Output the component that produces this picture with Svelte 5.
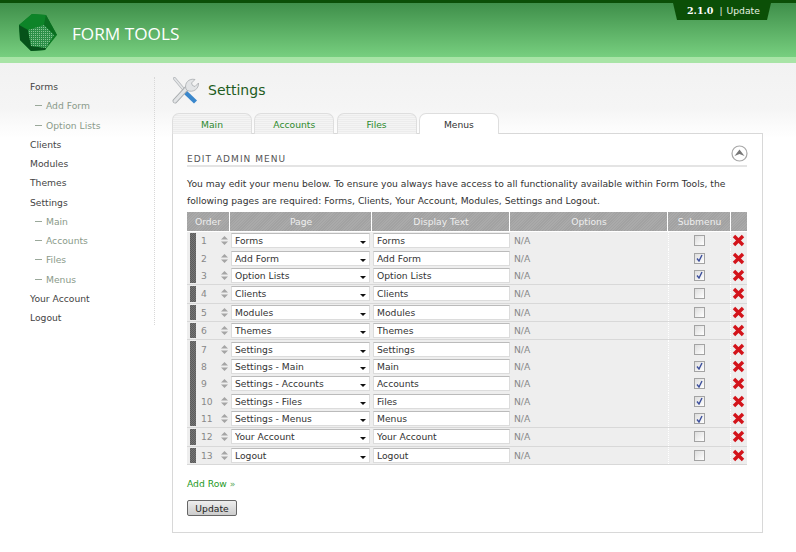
<script>
  const nav = [
    { label: "Forms" },
    { label: "Add Form", sub: true },
    { label: "Option Lists", sub: true },
    { label: "Clients" },
    { label: "Modules" },
    { label: "Themes" },
    { label: "Settings" },
    { label: "Main", sub: true },
    { label: "Accounts", sub: true },
    { label: "Files", sub: true },
    { label: "Menus", sub: true },
    { label: "Your Account" },
    { label: "Logout" }
  ];

  const tabs = ["Main", "Accounts", "Files", "Menus"];

  // Rows are grouped: submenu items stick to the parent row above them
  const groups = [
    [
      { n: 1, page: "Forms", text: "Forms" },
      { n: 2, page: "Add Form", text: "Add Form", sub: true },
      { n: 3, page: "Option Lists", text: "Option Lists", sub: true }
    ],
    [{ n: 4, page: "Clients", text: "Clients" }],
    [{ n: 5, page: "Modules", text: "Modules" }],
    [{ n: 6, page: "Themes", text: "Themes" }],
    [
      { n: 7, page: "Settings", text: "Settings" },
      { n: 8, page: "Settings - Main", text: "Main", sub: true },
      { n: 9, page: "Settings - Accounts", text: "Accounts", sub: true },
      { n: 10, page: "Settings - Files", text: "Files", sub: true },
      { n: 11, page: "Settings - Menus", text: "Menus", sub: true }
    ],
    [{ n: 12, page: "Your Account", text: "Your Account" }],
    [{ n: 13, page: "Logout", text: "Logout" }]
  ];
</script>

<header class="header">
  <div class="brand">
    <svg class="logo" width="42" height="40" viewBox="0 0 42 40">
      <defs>
        <pattern id="dots" width="2" height="2" patternUnits="userSpaceOnUse">
          <rect width="2" height="2" fill="#2c8f48" />
          <rect width="1" height="1" fill="#86c694" />
        </pattern>
      </defs>
      <path d="M2 12 L15 1 L29 2 L40 22 L28 37 L14 38 L3 27 Z" fill="#0b7a22" />
      <path d="M2 12 L15 1 L29 2 L27 12 L11 17 Z" fill="#0d8428" />
      <path d="M2 12 L11 17 L14 33 L14 38 L3 27 Z" fill="#06521a" />
      <path d="M29 2 L40 22 L37 22 L27 12 Z" fill="#0a6e20" />
      <path d="M14 33 L29 35 L28 37 L14 38 Z" fill="#06521a" />
      <path d="M11 17 L27 12 L37 22 L29 35 L14 33 Z" fill="url(#dots)" />
    </svg>
    <span class="brand-name">FORM TOOLS</span>
  </div>
  <div class="version"><b>2.1.0</b><span class="sep">|</span>Update</div>
</header>

<div class="page">
  <nav class="sidebar">
    {#each nav as item}
      <div class="nav-item" class:sub={item.sub}>
        {#if item.sub}<span class="dash"></span>{/if}{item.label}
      </div>
    {/each}
  </nav>

  <main class="content">
    <div class="title">
      <svg width="27" height="27" viewBox="0 0 27 27">
        <path d="M2.5 1.5 L13 14" stroke="#b4b8bb" stroke-width="3" stroke-linecap="round" />
        <path d="M2.5 1.5 L13 14" stroke="#e4e6e8" stroke-width="1.6" stroke-linecap="round" />
        <path d="M12 14 L23.5 25" stroke="#3a87cc" stroke-width="4.4" />
        <path d="M3 24 L15 11" stroke="#a8acaf" stroke-width="4.8" stroke-linecap="round" />
        <path d="M3 24 L15 11" stroke="#e2e4e6" stroke-width="3.2" stroke-linecap="round" />
        <path d="M14 12 C12 6 17 1 23 2.5 L19.5 6 L20.5 8.5 L23 9.5 L26.5 6 C27 12 21 16 15.5 13.5 Z" fill="#e2e4e6" stroke="#a8acaf" stroke-width=".8" />
      </svg>
      <h1>Settings</h1>
    </div>

    <div class="tabs">
      {#each tabs as tab}
        <div class="tab" class:active={tab === "Menus"}>{tab}</div>
      {/each}
    </div>

    <section class="panel">
      <div class="section-head">
        <h2>EDIT ADMIN MENU</h2>
        <svg class="collapse" width="17" height="17" viewBox="0 0 17 17">
          <circle cx="8.5" cy="8.5" r="7.5" fill="#fff" stroke="#a8a8a8" stroke-width="1.2" />
          <path d="M3.5 11 L8.5 4.5 L13.5 11 L8.5 9 Z" fill="#777" />
        </svg>
      </div>

      <p class="intro">
        You may edit your menu below. To ensure you always have access to all functionality available within Form Tools, the following pages are required: Forms, Clients, Your Account, Modules, Settings and Logout.
      </p>

      <div class="table">
        <div class="thead">
          <div>Order</div>
          <div>Page</div>
          <div>Display Text</div>
          <div>Options</div>
          <div>Submenu</div>
          <div></div>
        </div>

        {#each groups as group}
          <div class="group">
            <div class="grip"></div>
            <div class="group-rows">
              {#each group as row}
                <div class="row">
                  <div class="num">{row.n}</div>
                  <svg class="updown" width="7" height="9" viewBox="0 0 7 9">
                    <path d="M3.5 0 L7 3.5 H0 Z M3.5 9 L0 5.5 H7 Z" fill="#a5a5a5" />
                  </svg>
                  <div class="select">
                    <select aria-label="Page">
                      <option>{row.page}</option>
                    </select>
                    <span class="caret"></span>
                  </div>
                  <input class="text" type="text" value={row.text} aria-label="Display text" />
                  <div class="options">N/A</div>
                  <div class="submenu">
                    <div class="check">
                      {#if row.sub}
                        <svg width="7" height="8" viewBox="0 0 7 8">
                          <path d="M1 4.5 L3 7 L6 1" fill="none" stroke="#3c4f9c" stroke-width="1.4" />
                        </svg>
                      {/if}
                    </div>
                  </div>
                  <div class="del-cell">
                    <svg width="13" height="13" viewBox="0 0 13 13">
                      <path d="M2 2 L11 11 M11 2 L2 11" stroke="#d3141b" stroke-width="3.4" />
                    </svg>
                  </div>
                </div>
              {/each}
            </div>
          </div>
        {/each}
      </div>

      <div class="add-row">Add Row <span>»</span></div>
      <button class="update">Update</button>
    </section>
  </main>
</div>

<style>
  :global(body) {
    margin: 0;
    background: #fff;
    font-family: "DejaVu Sans", Verdana, sans-serif;
    font-size: 9.2px;
    color: #333;
  }

  /* Header */
  .header {
    height: 54px;
    border-top: 3px solid #0b4f07;
    background: linear-gradient(#3f8f4a, #77cf7f);
    border-bottom: 6px solid #a8e4a6;
    display: flex;
    justify-content: space-between;
  }

  .brand {
    display: flex;
    align-items: center;
    padding: 6px 0 0 17px;
    gap: 13px;
    height: 48px;
  }

  .brand-name {
    font-family: "Open Sans", "Liberation Sans", sans-serif;
    font-size: 17.2px;
    color: #fff;
  }

  .version {
    align-self: flex-start;
    box-sizing: border-box;
    width: 98px;
    margin-right: 25px;
    height: 17px;
    line-height: 16px;
    padding-left: 14px;
    background: #0b4f07;
    color: #e6f2e2;
    clip-path: polygon(0 0, 100% 0, calc(100% - 4px) 100%, 4px 100%);
  }

  .version b {
    font-family: "DejaVu Serif", serif;
    font-size: 9.5px;
    color: #fff;
  }

  .sep {
    margin: 0 4px 0 6px;
  }

  /* Layout */
  .page {
    display: flex;
    background: linear-gradient(#f2f2f2, #f5f5f5 45px, #fff 75px);
    height: 489px;
    box-sizing: border-box;
    padding-top: 14px;
  }

  .sidebar {
    width: 124px;
    height: 248px;
    padding-left: 30px;
    border-right: 1px dotted #d8d8d8;
    margin-right: 17px;
    flex: none;
  }

  .nav-item {
    height: 19.25px;
    line-height: 19px;
    color: #444;
  }

  .nav-item.sub {
    color: #8a9a8a;
    padding-left: 5px;
    display: flex;
    align-items: center;
  }

  .dash {
    width: 7px;
    height: 1px;
    background: #9aa89a;
    margin-right: 4px;
  }

  .content {
    width: 591px;
  }

  .title {
    display: flex;
    align-items: flex-start;
    height: 36px;
    gap: 9px;
  }

  h1 {
    margin: 3px 0 0;
    font-size: 14px;
    line-height: 20px;
    font-weight: normal;
    color: #1e5c22;
  }

  /* Tabs */
  .tabs {
    display: flex;
    gap: 2.3px;
    height: 20px;
    position: relative;
    z-index: 1;
  }

  .tab {
    width: 78px;
    height: 20px;
    border: 1px solid #dedede;
    border-bottom: none;
    border-radius: 7px 7px 0 0;
    text-align: center;
    line-height: 21px;
    color: #2d8a2d;
    background: repeating-linear-gradient(0deg, #ececec 0 1px, #f4f4f4 1px 2px);
  }

  .tab.active {
    background: #fff;
    color: #333;
  }

  .panel {
    border: 1px solid #d8d8d8;
    background: #fff;
    height: 400px;
    box-sizing: border-box;
    padding: 0 15px 0 14px;
  }

  .section-head {
    display: flex;
    justify-content: space-between;
    align-items: flex-end;
    height: 31px;
    border-bottom: 2px solid #e4e4e4;
  }

  h2 {
    margin: 0 0 1px;
    font-size: 9px;
    font-weight: normal;
    letter-spacing: 1.05px;
    color: #555;
  }

  .collapse {
    margin: 0 -1px 3px 0;
  }

  .intro {
    margin: 8px 0 0;
    line-height: 17px;
    color: #333;
  }

  /* Table */
  .table {
    margin-top: 3px;
    width: 560px;
  }

  .thead {
    display: grid;
    grid-template-columns: 43px 141px 137px 157px 62px 15px;
    column-gap: 1px;
    height: 19px;
    margin-bottom: 1px;
    line-height: 19px;
    text-align: center;
    color: #eee;
    background: repeating-linear-gradient(135deg, #a2a2a2 0 1px, #aaa 1px 2px);
  }

  .thead > div {
    border-right: 1px solid #fff;
  }

  .thead > div:last-child {
    border-right: none;
  }

  .group {
    display: flex;
    background: #eee;
    border-bottom: 1px solid #d8d8d8;
  }

  .grip {
    width: 6px;
    margin: 1px 4px 1px 3px;
    background: repeating-conic-gradient(#5c5c5c 0 25%, #747474 0 50%) 0 0 / 2px 2px;
    flex: none;
  }

  .group-rows {
    flex: 1;
  }

  .row {
    display: flex;
    align-items: center;
    height: 17.4px;
  }

  .num {
    width: 20px;
    padding-left: 1px;
    color: #888;
  }

  .updown {
    margin-right: 3px;
  }

  .select {
    position: relative;
    width: 139px;
    margin-right: 3px;
  }

  select,
  .text {
    display: block;
    box-sizing: border-box;
    height: 15px;
    margin: 0;
    padding: 0 0 0 3px;
    border: 1px solid #dcdcdc;
    border-top-color: #bbb;
    border-radius: 0;
    background: #fff;
    color: #333;
    font: inherit;
    outline: none;
  }

  select {
    appearance: none;
    width: 100%;
  }

  .caret {
    position: absolute;
    right: 4px;
    top: 8px;
    border: 3px solid transparent;
    border-top-color: #111;
    border-bottom: none;
  }

  .text {
    width: 137px;
    margin-right: 4px;
  }

  .options {
    width: 154px;
    color: #888;
  }

  .submenu {
    box-sizing: border-box;
    width: 63px;
    height: 100%;
    border-left: 1px dotted #fff;
    border-right: 1px dotted #fff;
    display: flex;
    align-items: center;
    justify-content: center;
  }

  .check {
    box-sizing: border-box;
    width: 11px;
    height: 11px;
    border: 1px solid #a3a3a3;
    background: linear-gradient(135deg, #ddd, #fff);
    display: flex;
    align-items: center;
    justify-content: center;
  }

  .del-cell {
    flex: none;
    width: 15px;
    display: flex;
    justify-content: center;
  }

  .add-row {
    margin-top: 13px;
    color: #1f9a1f;
  }

  .add-row span {
    color: #5aa95a;
  }

  .update {
    display: block;
    margin-top: 11px;
    width: 50px;
    height: 16px;
    padding: 0;
    border: 1px solid #666;
    border-radius: 2px;
    background: linear-gradient(#eee, #ccc);
    color: #222;
    font: inherit;
  }
</style>
